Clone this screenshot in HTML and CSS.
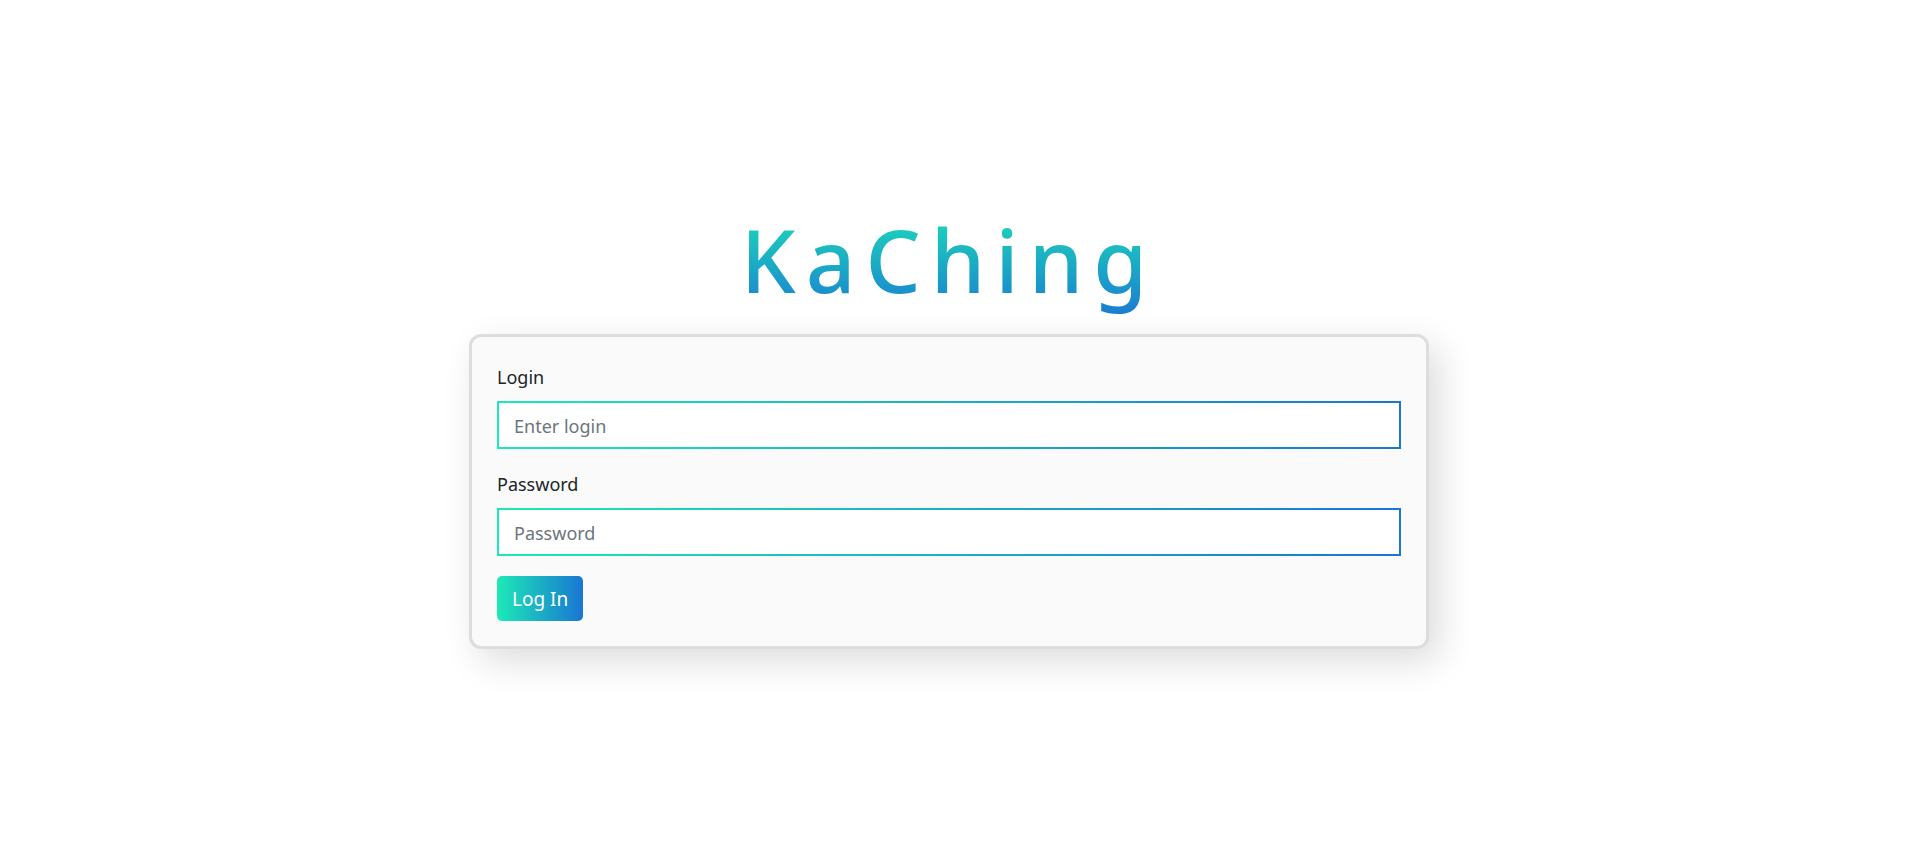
FILE: index.html
```html
<!DOCTYPE html>
<html lang="en">
<head>
  <meta charset="utf-8">
  <meta name="viewport" content="width=device-width, initial-scale=1">
  <title>KaChing</title>
  <link rel="stylesheet" href="styles.css">
</head>
<body>
  <main class="page">
    <h1 class="brand">KaChing</h1>
    <form class="card">
      <div class="field">
        <label class="label" for="login">Login</label>
        <input class="input" id="login" type="text" placeholder="Enter login">
      </div>
      <div class="field">
        <label class="label" for="password">Password</label>
        <input class="input" id="password" type="password" placeholder="Password">
      </div>
      <button class="button" type="submit">Log In</button>
    </form>
  </main>
</body>
</html>
```

FILE: styles.css
```css
:root {
  --mint: #1de9b6;
  --blue: #1976d2;
}

* {
  box-sizing: border-box;
}

body {
  margin: 0;
  background: #fff;
  color: #212529;
  font-family: "Noto Sans", "Open Sans", sans-serif;
  font-size: 18px;
}

.page {
  display: flex;
  flex-direction: column;
  align-items: center;
  justify-content: center;
  min-height: 100vh;
  padding: 0 11px 0 0;
}

.brand {
  margin: 0 0 12px;
  background: linear-gradient(to bottom, var(--mint), var(--blue));
  -webkit-background-clip: text;
  background-clip: text;
  color: transparent;
  font-size: 87px;
  font-weight: 500;
  line-height: 126px;
  letter-spacing: 10px;
}

.card {
  display: flex;
  flex-direction: column;
  align-items: flex-start;
  gap: 20px;
  width: 100%;
  max-width: 960px;
  padding: 25px;
  border: 3px solid #ddd;
  border-radius: 12px;
  background: #fafafa;
  box-shadow: 10px 12px 36px rgba(0, 0, 0, 0.14);
}

.field {
  display: flex;
  flex-direction: column;
  gap: 8px;
  width: 100%;
}

.label {
  line-height: 31px;
}

.input {
  width: 100%;
  height: 48px;
  padding: 10px 15px 8px;
  border: 2px solid;
  border-image: linear-gradient(to right, var(--mint), var(--blue)) 1;
  background: #fff;
  color: #495057;
  font: inherit;
}

.input::placeholder {
  color: #6c757d;
  opacity: 1;
}

.button {
  padding: 9px 15px 7px;
  border: 0;
  border-radius: 5px;
  background: linear-gradient(to right, var(--mint), var(--blue));
  color: #fff;
  font: inherit;
  font-size: 19px;
  line-height: 29px;
}
```
